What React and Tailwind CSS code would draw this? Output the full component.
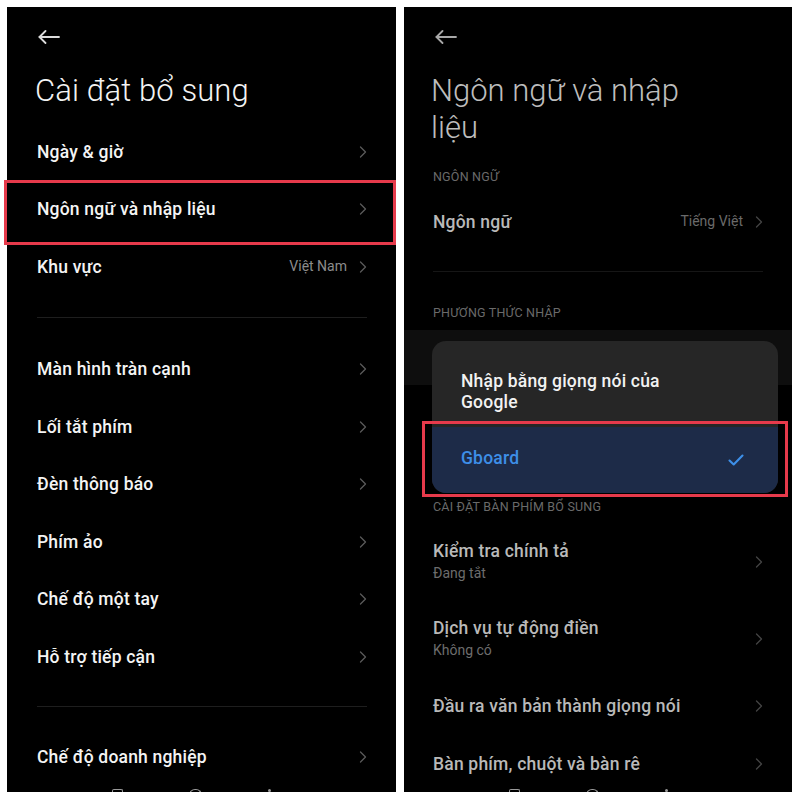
import React from "react";

function BackArrow({ color }) {
  return (
    <svg width="22" height="14" viewBox="0 0 22 14" fill="none" stroke={color} strokeWidth="1.8" strokeLinecap="round" strokeLinejoin="round">
      <path d="M21 7H1.5" />
      <path d="M7.5 1L1.5 7l6 6" />
    </svg>
  );
}

function Chevron({ color = "#555" }) {
  return (
    <svg width="8" height="12" viewBox="0 0 8 12" fill="none" stroke={color} strokeWidth="1.3" strokeLinecap="round" strokeLinejoin="round">
      <path d="M1.5 1l5 5-5 5" />
    </svg>
  );
}

function Row({ label, value, sub, dim = false, tall = false }) {
  return (
    <div className={`flex items-center justify-between ${tall ? "h-[77px]" : "h-[57.5px]"}`}>
      <div className="flex flex-col">
        <span className={`text-[17.5px] tracking-[0.2px] font-medium leading-[22px] ${dim ? "text-[#b9b9b9]" : "text-[#f4f4f4]"}`}>{label}</span>
        {sub && <span className="text-[14px] leading-[21px] mt-[1px] text-[#6d6d6d]">{sub}</span>}
      </div>
      <div className="flex items-center gap-[12px]">
        {value && <span className={`text-[14px] ${dim ? "text-[#6a6a6a]" : "text-[#8c8c8c]"}`}>{value}</span>}
        <Chevron color={dim ? "#444" : "#5a5a5a"} />
      </div>
    </div>
  );
}

function Divider({ dim = false }) {
  return <div className={`h-px ${dim ? "bg-[#161616]" : "bg-[#1e1e1e]"}`} />;
}

function Label({ children }) {
  return <div className="h-[32px] flex items-center text-[12.5px] tracking-[0.2px] text-[#6a6a6a]">{children}</div>;
}

function NavPeek() {
  return (
    <div className="absolute bottom-0 left-0 right-0 h-[3px] flex justify-center items-start gap-[66px] pr-[20px]">
      <div className="w-[11px] h-[6px] border-t border-x border-[#9a9a9a] rounded-t-[2px]" />
      <div className="w-[13px] h-[6px] border-t-[1.5px] border-x border-[#9a9a9a] rounded-t-full" />
      <div className="w-[3px] h-[3px] bg-[#9a9a9a] rounded-full" />
    </div>
  );
}

function LeftPanel() {
  return (
    <div className="relative w-[389px] h-[785px] bg-black overflow-hidden shrink-0">
      <div className="h-[60px] flex items-center pl-[31px]">
        <BackArrow color="#dcdcdc" />
      </div>
      <div className="h-[48px] flex items-center pl-[28px] text-[31px] font-light text-[#f3f3f3] tracking-[0.1px]">Cài đặt bổ sung</div>
      <div className="pl-[30px] pr-[29px] mt-[8px]">
        <Row label="Ngày & giờ" />
        <Row label="Ngôn ngữ và nhập liệu" />
        <Row label="Khu vực" value="Việt Nam" />
        <div className="pt-[21px] pb-[23px]">
          <Divider />
        </div>
        <Row label="Màn hình tràn cạnh" />
        <Row label="Lối tắt phím" />
        <Row label="Đèn thông báo" />
        <Row label="Phím ảo" />
        <Row label="Chế độ một tay" />
        <Row label="Hỗ trợ tiếp cận" />
        <div className="pt-[20px] pb-[22px]">
          <Divider />
        </div>
        <Row label="Chế độ doanh nghiệp" />
      </div>
      <NavPeek />
    </div>
  );
}

function RightPanel() {
  return (
    <div className="relative w-[388px] h-[785px] bg-black overflow-hidden shrink-0">
      <div className="h-[60px] flex items-center pl-[31px]">
        <BackArrow color="#a8a8a8" />
      </div>
      <div className="mt-[5px] pl-[27px] text-[31px] leading-[37px] font-light text-[#bdbdbd] w-[300px]">Ngôn ngữ và nhập liệu</div>
      <div className="pl-[29px] pr-[29px] mt-[15px]">
        <Label>NGÔN NGỮ</Label>
        <Row label="Ngôn ngữ" value="Tiếng Việt" dim />
        <div className="pt-[20px] pb-[26px]">
          <Divider dim />
        </div>
        <Label>PHƯƠNG THỨC NHẬP</Label>
      </div>
      <div className="h-[55px] bg-[#0e0e0e]" />
      <div className="pl-[29px] pr-[29px]">
        <div className="h-[107px]" />
        <Label>CÀI ĐẶT BÀN PHÍM BỔ SUNG</Label>
        <Row label="Kiểm tra chính tả" sub="Đang tắt" dim tall />
        <Row label="Dịch vụ tự động điền" sub="Không có" dim tall />
        <Row label="Đầu ra văn bản thành giọng nói" dim />
        <Row label="Bàn phím, chuột và bàn rê" dim />
      </div>

      <div className="absolute left-[28px] top-[334px] w-[346px] h-[152px] rounded-[14px] bg-[#262626] overflow-hidden flex flex-col">
        <div className="h-[86px] flex items-center pl-[29px] pt-[16px]">
          <div className="text-[17.5px] tracking-[0.2px] font-medium leading-[21px] text-[#f2f2f2] w-[240px]">Nhập bằng giọng nói của Google</div>
        </div>
        <div className="flex-1 bg-[#1d2b48] flex items-center justify-between pl-[29px] pr-[34px]">
          <span className="text-[17.5px] tracking-[0.2px] font-medium text-[#3d8fe8] -mt-[3px]">Gboard</span>
          <svg width="16" height="12" viewBox="0 0 16 12" fill="none" stroke="#3d8fe8" strokeWidth="2.1" strokeLinecap="round" strokeLinejoin="round">
            <path d="M1.5 6.5l4.2 4L14.5 1.5" />
          </svg>
        </div>
      </div>
      <NavPeek />
    </div>
  );
}

export default function App() {
  return (
    <div
      className="relative w-[800px] h-[800px] bg-white flex gap-[8px] pl-[7px] pt-[7px] overflow-hidden"
      style={{ fontFamily: "Roboto, 'Noto Sans', sans-serif" }}
    >
      <LeftPanel />
      <RightPanel />
      <div className="absolute left-[4px] top-[180px] w-[392px] h-[65px] border-[3.5px] border-[#e63a4b]" />
      <div className="absolute left-[422px] top-[421px] w-[366px] h-[76px] border-[3.5px] border-[#e63a4b]" />
    </div>
  );
}
